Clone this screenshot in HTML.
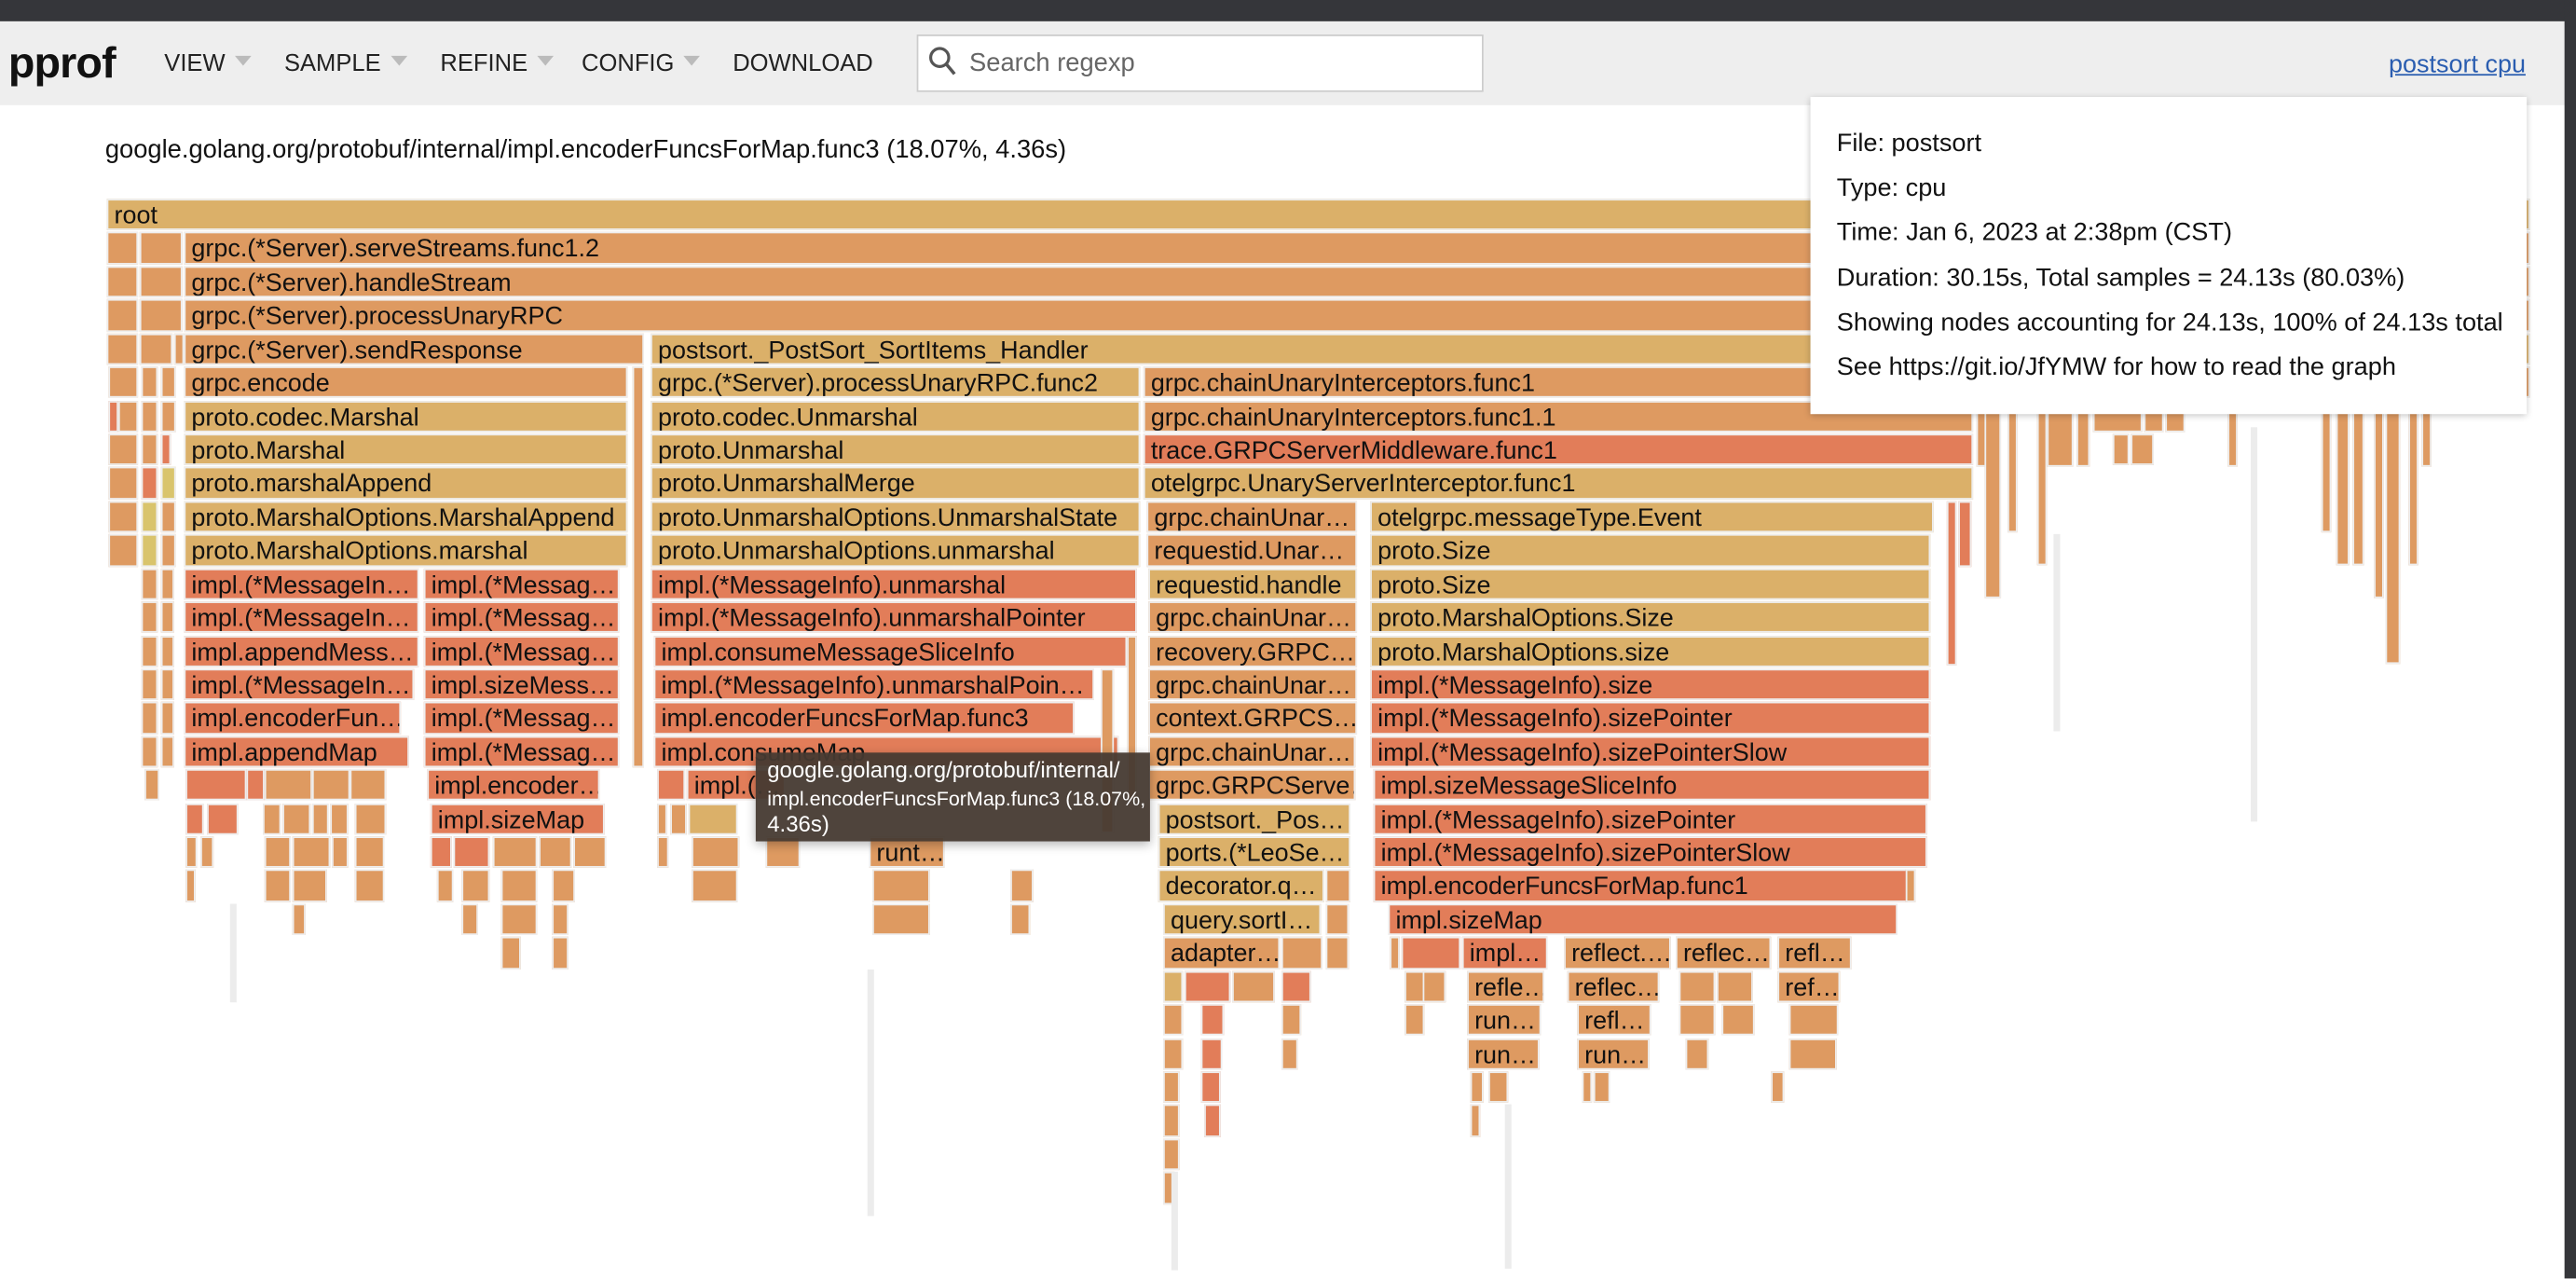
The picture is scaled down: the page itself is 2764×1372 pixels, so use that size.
<!DOCTYPE html>
<html><head><meta charset="utf-8"><style>
html,body{margin:0;padding:0;width:2764px;height:1372px;overflow:hidden;background:#fff}
#w{position:absolute;left:0;top:0;width:1568px;height:778px;transform:scale(1.76276);transform-origin:0 0;font-family:"Liberation Sans",Arial,sans-serif;color:#111}
.top{position:absolute;left:0;top:0;width:1568px;height:12.5px;background:#35363a}
.tb{position:absolute;left:0;top:12.5px;width:1568px;height:51px;background:#eeeeee}
.rs{position:absolute;left:1561px;top:0;width:7px;height:778px;background:#35363a}
.logo{position:absolute;left:5px;top:23px;font-size:26.5px;font-weight:bold;letter-spacing:-0.5px}
.m{position:absolute;top:31px;font-size:14.5px;color:#222}
.tri{display:inline-block;width:0;height:0;border-left:5px solid transparent;border-right:5px solid transparent;border-top:6px solid #bbb;margin-left:6px;vertical-align:3px}
.sb{position:absolute;left:558px;top:20.5px;width:343px;height:33px;background:#fff;border:1.5px solid #ccc}
.ph{position:absolute;left:590px;top:30px;font-size:15.5px;color:#666}
.lk{position:absolute;left:1454px;top:31px;font-size:15.3px;color:#2a5db0;text-decoration:underline}
.tt{position:absolute;left:64px;top:83px;font-size:15.5px}
.b{position:absolute;height:19.4px;box-sizing:border-box;border:0.6px solid #eee;font-size:15.3px;line-height:19px;padding-left:3.5px;white-space:nowrap;overflow:hidden;color:#111}
.y{background:#dbb069}.o{background:#de9a61}.r{background:#e27d59}.l{background:#d9c46c}.g{background:#ececec;border:none}
.info{position:absolute;left:1102px;top:59px;width:436px;height:193px;background:#fff;box-shadow:0 1px 4px rgba(0,0,0,.25);font-size:15.4px}
.info div{position:absolute;left:16px;white-space:nowrap}
.tip{position:absolute;left:460px;top:458px;width:240px;height:54px;background:rgba(70,58,50,.95);color:#fff;font-size:13.6px;line-height:16.5px;padding:3px 7px;box-sizing:border-box;box-shadow:0 2px 6px rgba(0,0,0,.3);white-space:nowrap;overflow:hidden}
</style></head><body><div id="w">
<div class="top"></div><div class="tb"></div>
<div class="logo">pprof</div>
<div class="m" style="left:100px">VIEW<span class="tri"></span></div>
<div class="m" style="left:173px">SAMPLE<span class="tri"></span></div>
<div class="m" style="left:268px">REFINE<span class="tri"></span></div>
<div class="m" style="left:354px">CONFIG<span class="tri"></span></div>
<div class="m" style="left:446px">DOWNLOAD</div>
<div class="sb"></div>
<svg style="position:absolute;left:565px;top:28px" width="18" height="20" viewBox="0 0 18 20"><circle cx="7" cy="7" r="5.5" fill="none" stroke="#555" stroke-width="1.8"/><path d="M11 11 L16 17" stroke="#555" stroke-width="2"/></svg>
<div class="ph">Search regexp</div>
<div class="lk">postsort cpu</div>
<div class="tt">google.golang.org/protobuf/internal/impl.encoderFuncsForMap.func3 (18.07%, 4.36s)</div>

<div class="b y" style="left:65px;width:1475px;top:121px">root</div>
<div class="b o" style="left:65px;width:19px;top:141.4px"></div><div class="b o" style="left:85px;width:26px;top:141.4px"></div><div class="b o" style="left:112px;width:1428px;top:141.4px">grpc.(*Server).serveStreams.func1.2</div>
<div class="b o" style="left:65px;width:19px;top:161.8px"></div><div class="b o" style="left:85px;width:26px;top:161.8px"></div><div class="b o" style="left:112px;width:1428px;top:161.8px">grpc.(*Server).handleStream</div>
<div class="b o" style="left:65px;width:19px;top:182.3px"></div><div class="b o" style="left:85px;width:26px;top:182.3px"></div><div class="b o" style="left:112px;width:1428px;top:182.3px">grpc.(*Server).processUnaryRPC</div>
<div class="b o" style="left:65px;width:19px;top:202.7px"></div><div class="b o" style="left:85px;width:20px;top:202.7px"></div><div class="b o" style="left:106px;width:5px;top:202.7px"></div>
<div class="b o" style="left:112px;width:280px;top:202.7px">grpc.(*Server).sendResponse</div>
<div class="b y" style="left:396px;width:1144px;top:202.7px">postsort._PostSort_SortItems_Handler</div>
<div class="b o" style="left:112px;width:270px;top:223.1px">grpc.encode</div>
<div class="b y" style="left:396px;width:298px;top:223.1px">grpc.(*Server).processUnaryRPC.func2</div>
<div class="b o" style="left:696px;width:844px;top:223.1px">grpc.chainUnaryInterceptors.func1</div>
<div class="b y" style="left:112px;width:270px;top:243.5px">proto.codec.Marshal</div>
<div class="b y" style="left:396px;width:298px;top:243.5px">proto.codec.Unmarshal</div>
<div class="b o" style="left:696px;width:505px;top:243.5px">grpc.chainUnaryInterceptors.func1.1</div>
<div class="b y" style="left:112px;width:270px;top:263.9px">proto.Marshal</div>
<div class="b y" style="left:396px;width:298px;top:263.9px">proto.Unmarshal</div>
<div class="b r" style="left:696px;width:505px;top:263.9px">trace.GRPCServerMiddleware.func1</div>
<div class="b y" style="left:112px;width:270px;top:284.4px">proto.marshalAppend</div>
<div class="b y" style="left:396px;width:298px;top:284.4px">proto.UnmarshalMerge</div>
<div class="b y" style="left:696px;width:505px;top:284.4px">otelgrpc.UnaryServerInterceptor.func1</div>
<div class="b y" style="left:112px;width:270px;top:304.8px">proto.MarshalOptions.MarshalAppend</div>
<div class="b y" style="left:396px;width:298px;top:304.8px">proto.UnmarshalOptions.UnmarshalState</div>
<div class="b o" style="left:698px;width:128px;top:304.8px">grpc.chainUnar…</div>
<div class="b y" style="left:834px;width:343px;top:304.8px">otelgrpc.messageType.Event</div>
<div class="b y" style="left:112px;width:270px;top:325.2px">proto.MarshalOptions.marshal</div>
<div class="b y" style="left:396px;width:298px;top:325.2px">proto.UnmarshalOptions.unmarshal</div>
<div class="b o" style="left:698px;width:128px;top:325.2px">requestid.Unar…</div>
<div class="b y" style="left:834px;width:341px;top:325.2px">proto.Size</div>
<div class="b r" style="left:112px;width:143px;top:345.6px">impl.(*MessageIn…</div>
<div class="b r" style="left:258px;width:119px;top:345.6px">impl.(*Messag…</div>
<div class="b r" style="left:396px;width:296px;top:345.6px">impl.(*MessageInfo).unmarshal</div>
<div class="b y" style="left:699px;width:127px;top:345.6px">requestid.handle</div>
<div class="b y" style="left:834px;width:341px;top:345.6px">proto.Size</div>
<div class="b r" style="left:112px;width:143px;top:366px">impl.(*MessageIn…</div>
<div class="b r" style="left:258px;width:119px;top:366px">impl.(*Messag…</div>
<div class="b r" style="left:396px;width:296px;top:366px">impl.(*MessageInfo).unmarshalPointer</div>
<div class="b o" style="left:699px;width:127px;top:366px">grpc.chainUnar…</div>
<div class="b y" style="left:834px;width:341px;top:366px">proto.MarshalOptions.Size</div>
<div class="b r" style="left:112px;width:143px;top:386.5px">impl.appendMess…</div>
<div class="b r" style="left:258px;width:119px;top:386.5px">impl.(*Messag…</div>
<div class="b r" style="left:398px;width:288px;top:386.5px">impl.consumeMessageSliceInfo</div>
<div class="b o" style="left:699px;width:127px;top:386.5px">recovery.GRPC…</div>
<div class="b y" style="left:834px;width:341px;top:386.5px">proto.MarshalOptions.size</div>
<div class="b r" style="left:112px;width:140px;top:406.9px">impl.(*MessageIn…</div>
<div class="b r" style="left:258px;width:119px;top:406.9px">impl.sizeMess…</div>
<div class="b r" style="left:398px;width:268px;top:406.9px">impl.(*MessageInfo).unmarshalPoin…</div>
<div class="b o" style="left:699px;width:127px;top:406.9px">grpc.chainUnar…</div>
<div class="b r" style="left:834px;width:341px;top:406.9px">impl.(*MessageInfo).size</div>
<div class="b r" style="left:112px;width:132px;top:427.3px">impl.encoderFun…</div>
<div class="b r" style="left:258px;width:119px;top:427.3px">impl.(*Messag…</div>
<div class="b r" style="left:398px;width:256px;top:427.3px">impl.encoderFuncsForMap.func3</div>
<div class="b o" style="left:699px;width:127px;top:427.3px">context.GRPCS…</div>
<div class="b r" style="left:834px;width:341px;top:427.3px">impl.(*MessageInfo).sizePointer</div>
<div class="b r" style="left:112px;width:137px;top:447.7px">impl.appendMap</div>
<div class="b r" style="left:258px;width:119px;top:447.7px">impl.(*Messag…</div>
<div class="b r" style="left:398px;width:283px;top:447.7px">impl.consumeMap</div>
<div class="b o" style="left:699px;width:126px;top:447.7px">grpc.chainUnar…</div>
<div class="b r" style="left:834px;width:341px;top:447.7px">impl.(*MessageInfo).sizePointerSlow</div>
<div class="b r" style="left:113px;width:37px;top:468.1px"></div><div class="b r" style="left:150px;width:11px;top:468.1px"></div><div class="b o" style="left:161px;width:29px;top:468.1px"></div><div class="b o" style="left:190px;width:23px;top:468.1px"></div><div class="b o" style="left:213px;width:22px;top:468.1px"></div>
<div class="b r" style="left:260px;width:105px;top:468.1px">impl.encoder…</div>
<div class="b r" style="left:400px;width:17px;top:468.1px"></div>
<div class="b r" style="left:418px;width:60px;top:468.1px">impl.(…</div>
<div class="b o" style="left:699px;width:126px;top:468.1px">grpc.GRPCServe…</div>
<div class="b r" style="left:836px;width:339px;top:468.1px">impl.sizeMessageSliceInfo</div>
<div class="b r" style="left:113px;width:11px;top:488.6px"></div><div class="b r" style="left:126px;width:19px;top:488.6px"></div><div class="b o" style="left:160px;width:11px;top:488.6px"></div><div class="b o" style="left:172px;width:17px;top:488.6px"></div><div class="b o" style="left:190px;width:10px;top:488.6px"></div><div class="b o" style="left:201px;width:11px;top:488.6px"></div><div class="b o" style="left:216px;width:19px;top:488.6px"></div>
<div class="b r" style="left:262px;width:106px;top:488.6px">impl.sizeMap</div>
<div class="b o" style="left:400px;width:6px;top:488.6px"></div><div class="b o" style="left:408px;width:10px;top:488.6px"></div><div class="b y" style="left:419px;width:30px;top:488.6px"></div>
<div class="b y" style="left:705px;width:117px;top:488.6px">postsort._Pos…</div>
<div class="b r" style="left:836px;width:337px;top:488.6px">impl.(*MessageInfo).sizePointer</div>
<div class="b o" style="left:113px;width:7px;top:509px"></div><div class="b o" style="left:122px;width:8px;top:509px"></div><div class="b o" style="left:161px;width:16px;top:509px"></div><div class="b o" style="left:178px;width:23px;top:509px"></div><div class="b o" style="left:202px;width:10px;top:509px"></div><div class="b o" style="left:216px;width:18px;top:509px"></div>
<div class="b r" style="left:262px;width:13px;top:509px"></div><div class="b r" style="left:276px;width:22px;top:509px"></div><div class="b o" style="left:300px;width:27px;top:509px"></div><div class="b o" style="left:328px;width:20px;top:509px"></div><div class="b o" style="left:349px;width:20px;top:509px"></div>
<div class="b o" style="left:400px;width:7px;top:509px"></div><div class="b o" style="left:421px;width:29px;top:509px"></div><div class="b o" style="left:466px;width:21px;top:509px"></div>
<div class="b o" style="left:529px;width:46px;top:509px">runt…</div>
<div class="b y" style="left:705px;width:117px;top:509px">ports.(*LeoSe…</div>
<div class="b r" style="left:836px;width:337px;top:509px">impl.(*MessageInfo).sizePointerSlow</div>
<div class="b o" style="left:113px;width:3px;top:529.4px"></div><div class="b o" style="left:161px;width:16px;top:529.4px"></div><div class="b o" style="left:178px;width:21px;top:529.4px"></div><div class="b o" style="left:216px;width:18px;top:529.4px"></div>
<div class="b o" style="left:266px;width:10px;top:529.4px"></div><div class="b o" style="left:281px;width:17px;top:529.4px"></div><div class="b o" style="left:305px;width:22px;top:529.4px"></div><div class="b o" style="left:336px;width:14px;top:529.4px"></div>
<div class="b o" style="left:421px;width:28px;top:529.4px"></div>
<div class="b o" style="left:531px;width:35px;top:529.4px"></div>
<div class="b o" style="left:615px;width:14px;top:529.4px"></div>
<div class="b y" style="left:705px;width:101px;top:529.4px">decorator.q…</div><div class="b o" style="left:807px;width:15px;top:529.4px"></div>
<div class="b r" style="left:836px;width:325px;top:529.4px">impl.encoderFuncsForMap.func1</div>
<div class="b o" style="left:178px;width:8px;top:549.8px"></div><div class="b o" style="left:281px;width:10px;top:549.8px"></div><div class="b o" style="left:305px;width:22px;top:549.8px"></div><div class="b o" style="left:336px;width:10px;top:549.8px"></div>
<div class="b o" style="left:531px;width:35px;top:549.8px"></div><div class="b o" style="left:615px;width:12px;top:549.8px"></div>
<div class="b y" style="left:708px;width:96px;top:549.8px">query.sortI…</div><div class="b o" style="left:807px;width:14px;top:549.8px"></div>
<div class="b r" style="left:845px;width:310px;top:549.8px">impl.sizeMap</div>
<div class="b o" style="left:305px;width:12px;top:570.2px"></div><div class="b o" style="left:336px;width:10px;top:570.2px"></div>
<div class="b o" style="left:708px;width:71px;top:570.2px">adapter…</div><div class="b o" style="left:780px;width:25px;top:570.2px"></div><div class="b o" style="left:807px;width:14px;top:570.2px"></div>
<div class="b o" style="left:846px;width:6px;top:570.2px"></div><div class="b r" style="left:853px;width:36px;top:570.2px"></div>
<div class="b r" style="left:890px;width:52px;top:570.2px">impl…</div>
<div class="b o" style="left:952px;width:65px;top:570.2px">reflect.…</div>
<div class="b o" style="left:1020px;width:58px;top:570.2px">reflec…</div>
<div class="b o" style="left:1082px;width:45px;top:570.2px">refl…</div>
<div class="b y" style="left:708px;width:12px;top:590.7px"></div><div class="b r" style="left:721px;width:28px;top:590.7px"></div><div class="b o" style="left:750px;width:26px;top:590.7px"></div><div class="b r" style="left:780px;width:18px;top:590.7px"></div>
<div class="b o" style="left:855px;width:13px;top:590.7px"></div><div class="b o" style="left:866px;width:14px;top:590.7px"></div>
<div class="b o" style="left:893px;width:47px;top:590.7px">refle…</div>
<div class="b o" style="left:954px;width:56px;top:590.7px">reflec…</div>
<div class="b o" style="left:1022px;width:22px;top:590.7px"></div><div class="b o" style="left:1045px;width:22px;top:590.7px"></div>
<div class="b o" style="left:1082px;width:38px;top:590.7px">ref…</div>
<div class="b o" style="left:708px;width:12px;top:611.1px"></div><div class="b r" style="left:731px;width:14px;top:611.1px"></div><div class="b o" style="left:780px;width:12px;top:611.1px"></div>
<div class="b o" style="left:855px;width:12px;top:611.1px"></div>
<div class="b o" style="left:893px;width:45px;top:611.1px">run…</div>
<div class="b o" style="left:960px;width:45px;top:611.1px">refl…</div>
<div class="b o" style="left:1022px;width:22px;top:611.1px"></div><div class="b o" style="left:1048px;width:20px;top:611.1px"></div>
<div class="b o" style="left:1089px;width:30px;top:611.1px"></div>
<div class="b o" style="left:708px;width:12px;top:631.5px"></div><div class="b r" style="left:731px;width:13px;top:631.5px"></div><div class="b o" style="left:780px;width:10px;top:631.5px"></div>
<div class="b o" style="left:893px;width:44px;top:631.5px">run…</div>
<div class="b o" style="left:960px;width:44px;top:631.5px">run…</div>
<div class="b o" style="left:1026px;width:14px;top:631.5px"></div><div class="b o" style="left:1089px;width:29px;top:631.5px"></div>
<div class="b o" style="left:708px;width:10px;top:651.9px"></div><div class="b r" style="left:731px;width:12px;top:651.9px"></div><div class="b o" style="left:895px;width:8px;top:651.9px"></div><div class="b o" style="left:906px;width:12px;top:651.9px"></div><div class="b o" style="left:963px;width:4px;top:651.9px"></div><div class="b o" style="left:970px;width:10px;top:651.9px"></div><div class="b o" style="left:1078px;width:8px;top:651.9px"></div>
<div class="b o" style="left:708px;width:10px;top:672.3px"></div><div class="b r" style="left:733px;width:10px;top:672.3px"></div><div class="b o" style="left:895px;width:5px;top:672.3px"></div>
<div class="b o" style="left:708px;width:10px;top:692.8px"></div><div class="b o" style="left:708px;width:7px;top:713.2px"></div>
<div class="b o" style="left:66px;width:18px;top:223.1px"></div><div class="b o" style="left:86px;width:10px;top:223.1px"></div><div class="b o" style="left:98px;width:9px;top:223.1px"></div>
<div class="b r" style="left:66px;width:5px;top:243.5px"></div><div class="b o" style="left:72px;width:12px;top:243.5px"></div><div class="b o" style="left:86px;width:10px;top:243.5px"></div><div class="b o" style="left:98px;width:9px;top:243.5px"></div>
<div class="b o" style="left:66px;width:18px;top:263.9px"></div><div class="b o" style="left:86px;width:10px;top:263.9px"></div><div class="b r" style="left:98px;width:6px;top:263.9px"></div>
<div class="b o" style="left:66px;width:18px;top:284.4px"></div><div class="b r" style="left:86px;width:10px;top:284.4px"></div><div class="b l" style="left:98px;width:9px;top:284.4px"></div>
<div class="b o" style="left:66px;width:18px;top:304.8px"></div><div class="b l" style="left:86px;width:10px;top:304.8px"></div><div class="b o" style="left:98px;width:9px;top:304.8px"></div>
<div class="b o" style="left:66px;width:18px;top:325.2px"></div><div class="b l" style="left:86px;width:10px;top:325.2px"></div><div class="b o" style="left:98px;width:9px;top:325.2px"></div>
<div class="b o" style="left:86px;width:10px;top:345.6px"></div><div class="b o" style="left:98px;width:8px;top:345.6px"></div>
<div class="b o" style="left:86px;width:10px;top:366px"></div><div class="b o" style="left:98px;width:8px;top:366px"></div>
<div class="b o" style="left:86px;width:10px;top:386.5px"></div><div class="b o" style="left:98px;width:8px;top:386.5px"></div>
<div class="b o" style="left:86px;width:10px;top:406.9px"></div><div class="b o" style="left:98px;width:8px;top:406.9px"></div>
<div class="b o" style="left:86px;width:10px;top:427.3px"></div><div class="b o" style="left:98px;width:8px;top:427.3px"></div>
<div class="b o" style="left:86px;width:10px;top:447.7px"></div><div class="b o" style="left:98px;width:8px;top:447.7px"></div>
<div class="b o" style="left:88px;width:9px;top:468.1px"></div>
<div class="b o" style="left:385px;width:7px;top:223.1px;height:244px"></div>
<div class="b o" style="left:686px;width:6px;top:386.5px;height:100px"></div>
<div class="b o" style="left:670px;width:8px;top:406.9px;height:100px"></div>
<div class="b r" style="left:1185px;width:6px;top:304.8px;height:100px"></div>
<div class="b r" style="left:1192px;width:8px;top:304.8px;height:40px"></div>
<div class="b o" style="left:1160px;width:6px;top:529.4px;height:20px"></div>
<div class="b o" style="left:1203px;width:3px;top:243.5px;height:40px"></div>
<div class="b o" style="left:1208px;width:10px;top:243.5px;height:120px"></div>
<div class="b o" style="left:1222px;width:5px;top:243.5px;height:80px"></div>
<div class="b o" style="left:1240px;width:4px;top:243.5px;height:100px"></div>
<div class="b o" style="left:1246px;width:16px;top:243.5px;height:40px"></div>
<div class="b o" style="left:1264px;width:8px;top:243.5px;height:40px"></div>
<div class="b o" style="left:1274px;width:30px;top:243.5px;height:19.4px"></div>
<div class="b o" style="left:1305px;width:12px;top:243.5px;height:19.4px"></div>
<div class="b o" style="left:1318px;width:12px;top:243.5px;height:19.4px"></div>
<div class="b o" style="left:1286px;width:10px;top:263.9px;height:19.4px"></div>
<div class="b o" style="left:1297px;width:14px;top:263.9px;height:19.4px"></div>
<div class="b o" style="left:1413px;width:3px;top:243.5px;height:80px"></div>
<div class="b o" style="left:1422px;width:8px;top:243.5px;height:100px"></div>
<div class="b o" style="left:1432px;width:7px;top:243.5px;height:100px"></div>
<div class="b o" style="left:1445px;width:3px;top:243.5px;height:120px"></div>
<div class="b o" style="left:1452px;width:9px;top:243.5px;height:160px"></div>
<div class="b o" style="left:1466px;width:3px;top:243.5px;height:100px"></div>
<div class="b o" style="left:1474px;width:3px;top:243.5px;height:40px"></div>
<div class="b o" style="left:1356px;width:4px;top:243.5px;height:40px"></div>
<div class="b g" style="left:140px;width:1px;top:550px;height:60px"></div>
<div class="b g" style="left:528px;width:2px;top:590px;height:150px"></div>
<div class="b g" style="left:713px;width:2px;top:713px;height:60px"></div>
<div class="b g" style="left:916px;width:2px;top:672px;height:100px"></div>
<div class="b g" style="left:1250px;width:2px;top:325px;height:120px"></div>
<div class="b g" style="left:1370px;width:2px;top:260px;height:240px"></div>

<div class="info">
<div style="top:20px">File: postsort</div>
<div style="top:47px">Type: cpu</div>
<div style="top:74px">Time: Jan 6, 2023 at 2:38pm (CST)</div>
<div style="top:102px">Duration: 30.15s, Total samples = 24.13s (80.03%)</div>
<div style="top:129px">Showing nodes accounting for 24.13s, 100% of 24.13s total</div>
<div style="top:156px">See https://git.io/JfYMW for how to read the graph</div>
</div>
<div class="tip">google.golang.org/protobuf/internal/<br><span style="font-size:12.2px">impl.encoderFuncsForMap.func3 (18.07%,</span><br>4.36s)</div>
<div class="rs"></div>
</div></body></html>
